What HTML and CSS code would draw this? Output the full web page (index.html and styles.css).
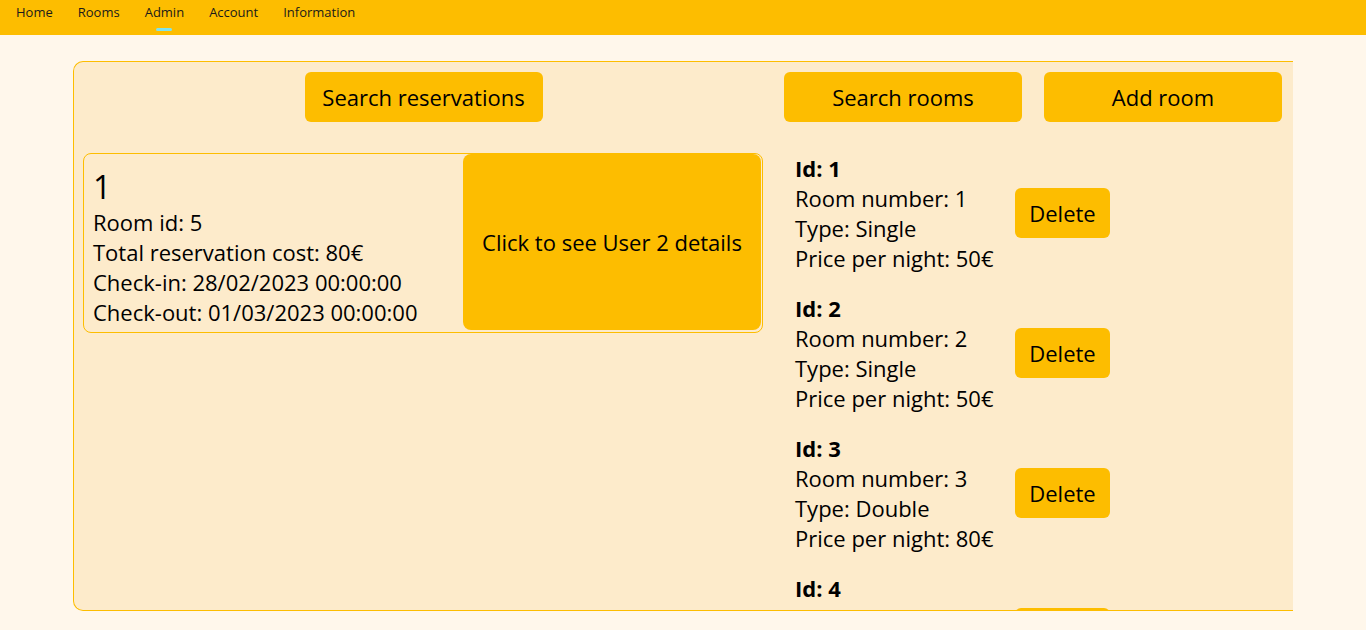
FILE: index.html
```html
<!DOCTYPE html>
<html lang="en">
<head>
<meta charset="utf-8">
<title>Admin</title>
<link rel="stylesheet" href="styles.css">
</head>
<body>
<nav class="nav">
  <a class="nav-item">Home</a>
  <a class="nav-item">Rooms</a>
  <a class="nav-item active">Admin</a>
  <a class="nav-item">Account</a>
  <a class="nav-item">Information</a>
</nav>
<main class="main">
  <section class="panel">
    <div class="col-left">
      <div class="btn-row center">
        <button class="btn">Search reservations</button>
      </div>
      <div class="res-card">
        <div class="res-info">
          <div class="res-id">1</div>
          <div class="line">Room id: 5</div>
          <div class="line">Total reservation cost: 80€</div>
          <div class="line">Check-in: 28/02/2023 00:00:00</div>
          <div class="line">Check-out: 01/03/2023 00:00:00</div>
        </div>
        <button class="user-btn">Click to see User 2 details</button>
      </div>
    </div>
    <div class="col-right">
      <div class="btn-row">
        <button class="btn">Search rooms</button>
        <button class="btn">Add room</button>
      </div>
      <div class="room-list">
        <div class="room">
          <div class="room-info">
            <div class="line bold">Id: 1</div>
            <div class="line">Room number: 1</div>
            <div class="line">Type: Single</div>
            <div class="line">Price per night: 50€</div>
          </div>
          <button class="del-btn">Delete</button>
        </div>
        <div class="room">
          <div class="room-info">
            <div class="line bold">Id: 2</div>
            <div class="line">Room number: 2</div>
            <div class="line">Type: Single</div>
            <div class="line">Price per night: 50€</div>
          </div>
          <button class="del-btn">Delete</button>
        </div>
        <div class="room">
          <div class="room-info">
            <div class="line bold">Id: 3</div>
            <div class="line">Room number: 3</div>
            <div class="line">Type: Double</div>
            <div class="line">Price per night: 80€</div>
          </div>
          <button class="del-btn">Delete</button>
        </div>
        <div class="room">
          <div class="room-info">
            <div class="line bold">Id: 4</div>
            <div class="line">Room number: 4</div>
            <div class="line">Type: Double</div>
            <div class="line">Price per night: 80€</div>
          </div>
          <button class="del-btn">Delete</button>
        </div>
      </div>
    </div>
  </section>
</main>
</body>
</html>
```

FILE: styles.css
```css
* { box-sizing: border-box; }
html, body { margin: 0; padding: 0; }
body {
  background: #fff7eb;
  font-family: "Open Sans", "Noto Sans", sans-serif;
  color: #000;
  height: 630px;
  overflow: hidden;
}
.nav {
  height: 35px;
  background: #fdbd00;
  display: flex;
  align-items: flex-start;
  padding-left: 3.5px;
}
.nav-item {
  font-size: 13px;
  line-height: 24px;
  padding: 0 12.5px;
  color: #1a1a1a;
  position: relative;
  cursor: pointer;
}
.nav-item.active::after {
  content: "";
  position: absolute;
  left: 50%;
  top: 28px;
  width: 16px;
  height: 3px;
  margin-left: -8px;
  border-radius: 2px;
  background: #7fe3ec;
}
.main {
  padding: 26px 0 0 73px;
}
.panel {
  width: 1220px;
  height: 550px;
  background: #fdebcb;
  border: 1px solid #fdbd00;
  border-right: none;
  border-radius: 10px 0 0 10px;
  display: flex;
  overflow: hidden;
}
.col-left { width: 699px; flex: none; }
.col-right { width: 520px; flex: none; }
.btn-row {
  display: flex;
  padding-top: 10px;
  margin-bottom: 31px;
}
.btn-row.center { justify-content: center; }
.btn {
  width: 238px;
  height: 50px;
  margin: 0 11px;
  border: none;
  border-radius: 6px;
  background: #fdbd00;
  font-family: inherit;
  font-size: 22px;
  color: #000;
}
.res-card {
  margin-left: 9px;
  width: 680px;
  height: 180px;
  border: 1px solid #fdbd00;
  border-radius: 8px;
  display: flex;
  justify-content: space-between;
}
.res-info { padding: 13px 0 0 9px; }
.res-id { font-size: 32px; line-height: 40px; }
.line { font-size: 22px; line-height: 30px; white-space: nowrap; }
.bold { font-weight: 700; }
.user-btn {
  width: 298px;
  height: 176px;
  margin: 0 1px 0 0;
  border: none;
  border-radius: 8px;
  background: #fdbd00;
  font-family: inherit;
  font-size: 22px;
  color: #000;
}
.room-list { padding-left: 22px; }
.room {
  display: flex;
  align-items: center;
  margin-bottom: 20px;
}
.room-info { width: 220px; }
.del-btn {
  width: 95px;
  height: 50px;
  border: none;
  border-radius: 6px;
  background: #fdbd00;
  font-family: inherit;
  font-size: 22px;
  color: #000;
}
```
